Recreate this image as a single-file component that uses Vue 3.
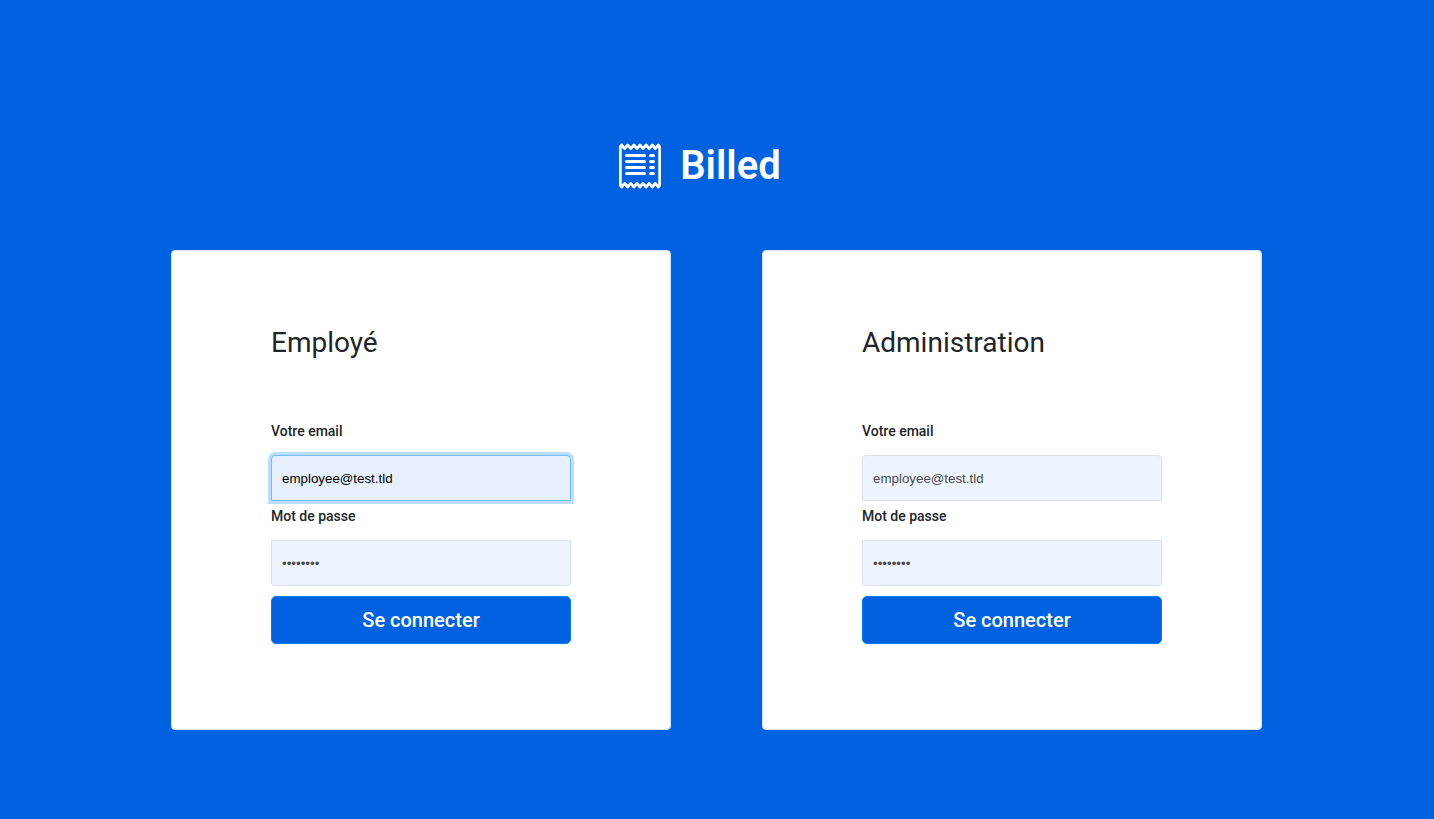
<script setup>
const forms = [
  { id: 'employee', title: 'Employé', active: true },
  { id: 'admin', title: 'Administration', active: false },
]
</script>

<template>
  <main class="page">
    <header class="brand">
      <svg class="logo" viewBox="0 0 42 46" aria-hidden="true">
        <path d="M1.3 3.8 L2.6 2 L5.7 5.6 L8.7 2 L11.8 5.6 L14.9 2 L18 5.6 L21 2 L24 5.6 L27.1 2 L30.2 5.6 L33.3 2 L36.3 5.6 L39.4 2 L40.7 3.8 V42.2 L39.4 44 L36.3 40.4 L33.3 44 L30.2 40.4 L27.1 44 L24 40.4 L21 44 L18 40.4 L14.9 44 L11.8 40.4 L8.7 44 L5.7 40.4 L2.6 44 L1.3 42.2 Z" fill="none" stroke="#fff" stroke-width="2.8" stroke-linejoin="round" />
        <path d="M7.5 12.5H25.5M31.5 12.5H34.5M7.5 18.5H25.5M31.5 18.5H34.5M7.5 24.5H25.5M31.5 24.5H34.5M7.5 30.5H25.5M31.5 30.5H34.5" fill="none" stroke="#fff" stroke-width="3" stroke-linecap="round" />
      </svg>
      <h1>Billed</h1>
    </header>
    <div class="cards">
      <section v-for="f in forms" :key="f.id" class="card">
        <h2>{{ f.title }}</h2>
        <form @submit.prevent>
          <label :for="f.id + '-email'">Votre email</label>
          <input :id="f.id + '-email'" class="email" :class="{ active: f.active }" type="email" value="employee@test.tld" />
          <label :for="f.id + '-password'">Mot de passe</label>
          <input :id="f.id + '-password'" class="password" type="password" value="employee" />
          <button type="submit">Se connecter</button>
        </form>
      </section>
    </div>
  </main>
</template>

<style>
body { margin: 0; background: #0061e1; }
</style>

<style scoped>
* { box-sizing: border-box; }
.page {
  min-height: 100vh;
  background: #0061e1;
  color: #212529;
  font-family: Roboto, sans-serif;
  padding: 142px 126px 89px 125px;
}
.brand {
  display: flex;
  justify-content: center;
  align-items: center;
  gap: 19px;
  min-height: 48px;
  margin-bottom: 60px;
  padding-right: 33px;
  color: #fff;
}
.logo { width: 42px; height: 46px; }
h1 { margin: 0; font-size: 40px; line-height: 46px; font-weight: 600; }
.cards { display: flex; justify-content: center; gap: 91px; }
.card {
  width: 500px;
  padding: 75px 99px 85px;
  background: #fff;
  border: 1px solid #d4e3f9;
  border-radius: 4px;
}
h2 { margin: 0 0 63px; font-size: 28px; line-height: 34px; font-weight: 400; }
form { display: flex; flex-direction: column; }
label { font-size: 14px; line-height: 16px; font-weight: 500; margin-bottom: 16px; }
input {
  width: 100%;
  height: 46px;
  padding: 10px;
  border: 1px solid #dae0e5;
  background: #edf4ff;
  color: #4d4d4d;
  font-family: "Liberation Sans", Arial, sans-serif;
  outline: none;
}
.email { border-radius: 4px 4px 0 0; margin-bottom: 7px; }
.password { border-radius: 0 0 4px 4px; margin-bottom: 10px; }
.active {
  border-color: #70bcf8;
  background: #e6f0fd;
  color: #000;
  box-shadow: 0 0 0 3px #bcdefc;
}
button {
  height: 48px;
  border: 1px solid #007bff;
  border-radius: 5px;
  background: #0061e1;
  color: #fff;
  font: 500 20px/30px Roboto, sans-serif;
  cursor: pointer;
}
</style>
